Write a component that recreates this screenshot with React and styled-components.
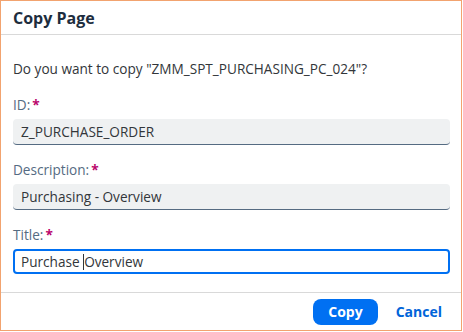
import { createGlobalStyle, styled } from "styled-components";

const GlobalStyle = createGlobalStyle`
  body {
    margin: 0;
    background: #ffffff;
    font-family: "Open Sans", "Noto Sans", sans-serif;
  }
`;

const Dialog = styled.div`
  box-sizing: border-box;
  width: 462px;
  height: 331px;
  border: 1px solid #f2a36f;
  background: #ffffff;
  display: flex;
  flex-direction: column;
`;

const Header = styled.div`
  height: 33px;
  flex-shrink: 0;
  display: flex;
  align-items: center;
  padding: 0 12px;
  border-bottom: 1px solid #d9d9d9;
  font-size: 16px;
  font-weight: 700;
  color: #1d2d3e;
`;

const Body = styled.div`
  flex: 1;
  min-height: 0;
  padding: 24px 11px 0 12px;
  display: flex;
  flex-direction: column;
`;

const Message = styled.p`
  margin: 0 0 17px;
  line-height: 20px;
  font-size: 13.6px;
  color: #32363a;
`;

const Label = styled.label`
  display: block;
  line-height: 18px;
  font-size: 13.6px;
  color: #556b82;
  margin-bottom: 5px;
`;

const Required = styled.span`
  color: #ba066c;
  margin-left: 2px;
  font-weight: 700;
`;

const Field = styled.div`
  box-sizing: border-box;
  flex-shrink: 0;
  height: ${(p) => (p.$focused ? "25px" : "26px")};
  margin-bottom: 16px;
  display: flex;
  align-items: center;
  border-radius: 4px;
  font-size: 13.6px;
  color: #32363a;
  white-space: pre;
  background: ${(p) => (p.$focused ? "#ffffff" : "#eff1f2")};
  border: ${(p) => (p.$focused ? "2px solid #0070f2" : "none")};
  border-bottom: ${(p) =>
    p.$focused ? "2px solid #0070f2" : "1px solid #556b82"};
  padding: 0 ${(p) => (p.$focused ? "6px" : "8px")};
`;

const Caret = styled.span`
  display: inline-block;
  width: 1px;
  height: 16px;
  background: #32363a;
`;

const Footer = styled.div`
  height: 37px;
  flex-shrink: 0;
  border-top: 1px solid #d9d9d9;
  display: flex;
  align-items: center;
  justify-content: flex-end;
  gap: 18px;
  padding: 0 19px 0 0;
`;

const Button = styled.button`
  height: 26px;
  border: none;
  border-radius: 8px;
  font-family: inherit;
  font-size: 14px;
  font-weight: 700;
  cursor: pointer;
  padding: ${(p) => (p.$primary ? "0 15px" : "0")};
  min-width: ${(p) => (p.$primary ? "64px" : "auto")};
  background: ${(p) => (p.$primary ? "#0070f2" : "transparent")};
  color: ${(p) => (p.$primary ? "#ffffff" : "#0064d9")};
`;

export default function App() {
  return (
    <>
      <GlobalStyle />
      <Dialog>
        <Header>Copy Page</Header>
        <Body>
          <Message>Do you want to copy "ZMM_SPT_PURCHASING_PC_024"?</Message>
          <Label>
            ID:<Required>*</Required>
          </Label>
          <Field>Z_PURCHASE_ORDER</Field>
          <Label>
            Description:<Required>*</Required>
          </Label>
          <Field>Purchasing - Overview</Field>
          <Label>
            Title:<Required>*</Required>
          </Label>
          <Field $focused>
            {"Purchase "}
            <Caret />
            Overview
          </Field>
        </Body>
        <Footer>
          <Button $primary>Copy</Button>
          <Button>Cancel</Button>
        </Footer>
      </Dialog>
    </>
  );
}
